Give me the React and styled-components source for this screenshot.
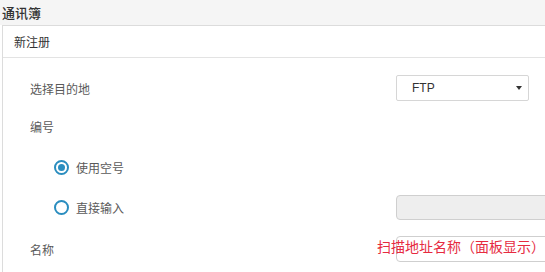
import React, { useState } from "react";
import styled, { createGlobalStyle } from "styled-components";

const GlobalStyle = createGlobalStyle`
  html, body {
    margin: 0;
    padding: 0;
    background: #fff;
    overflow: hidden;
  }
  body {
    font-family: "Noto Sans CJK SC", "Noto Sans", "Liberation Sans", sans-serif;
    color: #555;
  }
`;

const Page = styled.div`
  width: 545px;
  height: 272px;
  overflow: hidden;
  position: relative;
`;

const TitleBar = styled.div`
  height: 25px;
  background: #f5f5f5;
  display: flex;
  align-items: center;
  padding-left: 2px;
  font-size: 13px;
  font-weight: 500;
  color: #333;
`;

const Panel = styled.div`
  margin-left: 2px;
  width: 640px;
  border: 1px solid #dcdcdc;
  border-right: none;
  border-bottom: none;
  background: #fff;
  height: 260px;
`;

const PanelHeader = styled.div`
  height: 31px;
  display: flex;
  align-items: center;
  padding-left: 11px;
  border-bottom: 1px solid #e3e3e3;
  font-size: 12px;
  color: #333;
`;

const Form = styled.div`
  display: flex;
  flex-direction: column;
`;

const Row = styled.div`
  display: grid;
  grid-template-columns: 393px 1fr;
  align-items: center;
  height: ${(p) => p.$h || 26}px;
  margin-top: ${(p) => p.$top}px;
`;

const Label = styled.div`
  padding-left: ${(p) => (p.$indent ? 52 : 27)}px;
  font-size: 12px;
  color: #5a5a5a;
  display: flex;
  align-items: center;
`;

const Select = styled.div`
  width: 133px;
  height: 26px;
  box-sizing: border-box;
  border: 1px solid #d6d6d6;
  border-radius: 2px;
  display: flex;
  align-items: center;
  padding: 0 6px 0 15px;
  font-family: "Liberation Sans", Arial, sans-serif;
  font-size: 12px;
  color: #333;
  justify-content: space-between;
`;

const Caret = styled.span`
  width: 0;
  height: 0;
  border-left: 3px solid transparent;
  border-right: 3px solid transparent;
  border-top: 4px solid #333;
`;

const TextInput = styled.div`
  width: 200px;
  height: ${(p) => p.$h || 26}px;
  box-sizing: border-box;
  border: 1px solid #cfcfcf;
  border-radius: 4px;
  background: ${(p) => (p.disabled ? "#eeeeee" : "#fff")};
`;

const RadioCircle = styled.span`
  width: 15px;
  height: 15px;
  box-sizing: border-box;
  border: 2px solid #2a8dbf;
  border-radius: 50%;
  display: inline-flex;
  align-items: center;
  justify-content: center;
  margin-right: 7px;
  margin-left: -1px;
  cursor: pointer;

  &::after {
    content: "";
    width: 7px;
    height: 7px;
    border-radius: 50%;
    background: ${(p) => (p.$checked ? "#2a8dbf" : "transparent")};
  }
`;

const Note = styled.div`
  position: absolute;
  left: 377px;
  top: 236px;
  font-size: 14px;
  color: #e62b3f;
  white-space: nowrap;
  pointer-events: none;
`;

const App = () => {
  const [mode, setMode] = useState("empty");

  return (
    <Page>
      <GlobalStyle />
      <TitleBar>通讯簿</TitleBar>
      <Panel>
        <PanelHeader>新注册</PanelHeader>
        <Form>
          <Row $top={17}>
            <Label>选择目的地</Label>
            <Select>
              FTP
              <Caret />
            </Select>
          </Row>
          <Row $top={12}>
            <Label>编号</Label>
          </Row>
          <Row $top={15}>
            <Label $indent onClick={() => setMode("empty")}>
              <RadioCircle $checked={mode === "empty"} />
              使用空号
            </Label>
          </Row>
          <Row $top={15} $h={25}>
            <Label $indent onClick={() => setMode("direct")}>
              <RadioCircle $checked={mode === "direct"} />
              直接输入
            </Label>
            <TextInput disabled={mode !== "direct"} $h={25} />
          </Row>
          <Row $top={16}>
            <Label>名称</Label>
            <TextInput />
          </Row>
        </Form>
      </Panel>
      <Note>扫描地址名称（面板显示）</Note>
    </Page>
  );
};

export default App;
